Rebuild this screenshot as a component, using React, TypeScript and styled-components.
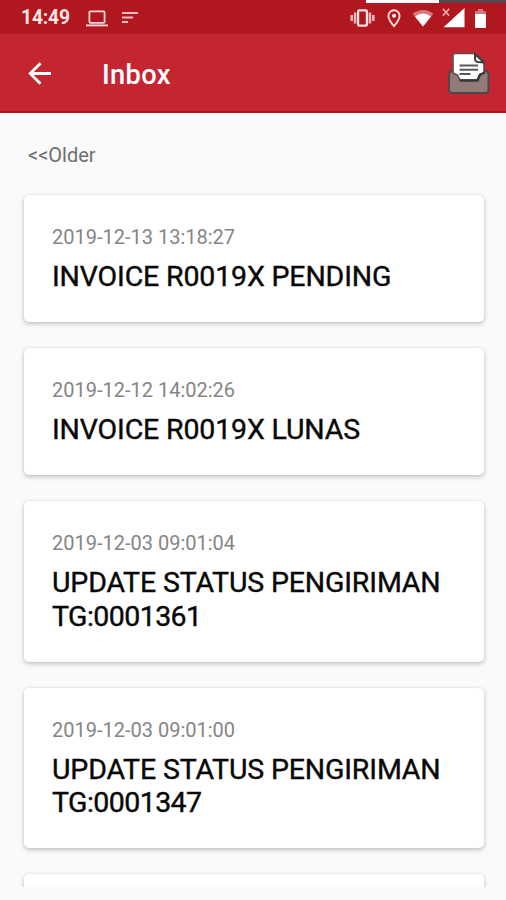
import React from 'react';
import styled, { createGlobalStyle } from 'styled-components';

const GlobalStyle = createGlobalStyle`
  * { box-sizing: border-box; }
  body { margin: 0; background: #fafafa; }
`;

const Screen = styled.div`
  position: relative;
  display: flex;
  flex-direction: column;
  width: 506px;
  height: 900px;
  overflow: hidden;
  background: #fafafa;
  font-family: Roboto, sans-serif;
`;

const TopStrip = styled.div`
  position: absolute;
  top: 0;
  right: 0;
  width: 140px;
  height: 3px;
  background: linear-gradient(to right, #fff 73px, #55474b 73px);
`;

const StatusBar = styled.header`
  display: flex;
  align-items: center;
  flex: none;
  height: 34px;
  padding: 2px 20px 0 21px;
  background: #b0171f;
  color: #fbe4e4;
`;

const Clock = styled.span`
  width: 65px;
  font-size: 19.3px;
  font-weight: 700;
  line-height: 32px;
  letter-spacing: -0.15px;
  white-space: nowrap;
`;

const Notifications = styled.div`
  display: flex;
  align-items: center;
  gap: 14px;
`;

const SystemIcons = styled.div`
  display: grid;
  grid-template-columns: 37px 25px 30px 33px 11px;
  align-items: center;
  margin-left: auto;
`;

const Icon = styled.svg`
  display: block;
  flex: none;
`;

const AppBar = styled.div`
  display: flex;
  align-items: center;
  flex: none;
  height: 79px;
  padding: 0 15px 0 28px;
  background: #c42631;
  border-bottom: 2px solid #b3131d;
  color: #fff;
`;

const Heading = styled.h1`
  flex: 1;
  margin: 5px 0 0 50px;
  font-size: 27.3px;
  font-weight: 500;
  line-height: 32px;
  letter-spacing: 0.3px;
`;

const Content = styled.main`
  display: flex;
  flex-direction: column;
  flex: none;
  height: 774px;
  overflow: hidden;
  padding: 28px 22px 0 24px;
`;

const OlderLink = styled.a`
  height: 28px;
  margin: 0 0 25px 4px;
  color: #6e6e6e;
  font-size: 20px;
  line-height: 28px;
`;

const MessageList = styled.div`
  display: flex;
  flex-direction: column;
  padding-top: 1px;
  gap: 26px;
`;

const Card = styled.article`
  flex: none;
  padding: 31px 28px 29px;
  border-radius: 5px;
  background: #fff;
  box-shadow: 0 2px 5px rgba(0, 0, 0, 0.22), 0 0 3px rgba(0, 0, 0, 0.08);
`;

const Timestamp = styled.time`
  display: block;
  height: 24px;
  margin-bottom: 10px;
  color: #858585;
  font-size: 20px;
  line-height: 23px;
`;

const Subject = styled.h2`
  margin: 0;
  color: #080808;
  font-size: 28.5px;
  font-weight: 400;
  line-height: 33.2px;
  letter-spacing: -0.55px;
  -webkit-text-stroke: 0.4px #080808;
  white-space: pre-line;

  &::first-line { letter-spacing: -0.15px; }
`;

const messages = [
  { time: '2019-12-13 13:18:27', subject: 'INVOICE R0019X PENDING' },
  { time: '2019-12-12 14:02:26', subject: 'INVOICE R0019X LUNAS' },
  { time: '2019-12-03 09:01:04', subject: 'UPDATE STATUS PENGIRIMAN\nTG:0001361' },
  { time: '2019-12-03 09:01:00', subject: 'UPDATE STATUS PENGIRIMAN\nTG:0001347' },
];

const LaptopIcon = () => (
  <Icon width="22" height="17" viewBox="0 0 22 17" fill="none" stroke="#fbd9da">
    <rect x="3.4" y="1.4" width="15.2" height="11.4" rx="1" strokeWidth="1.8" />
    <path d="M0 15.4h22" strokeWidth="1.9" />
  </Icon>
);

const NotesIcon = () => (
  <Icon width="18" height="14" viewBox="0 0 18 14" stroke="#f3bcbe" strokeWidth="2">
    <path d="M0 2h16M0 6.5h11M0 11h6" />
  </Icon>
);

const VibrateIcon = () => (
  <Icon width="25" height="18" viewBox="0 0 24 18" fill="none">
    <path d="M1.2 6v6M4.6 3.5v11M22.8 6v6M19.4 3.5v11" stroke="#efb5b8" strokeWidth="2.6" />
    <rect x="7.6" y="1.4" width="8.8" height="15.2" rx="1.2" stroke="#fbe4e4" strokeWidth="2.2" />
  </Icon>
);

const LocationIcon = () => (
  <Icon width="14" height="19" viewBox="0 0 14 19" fill="none">
    <path d="M7 1.2A5.6 5.6 0 0 0 1.4 6.8C1.4 10.8 7 17.2 7 17.2S12.6 10.8 12.6 6.8A5.6 5.6 0 0 0 7 1.2Z" stroke="#fbdcdc" strokeWidth="1.9" />
    <circle cx="7" cy="6.8" r="2.1" fill="#fbe4e4" />
  </Icon>
);

const WifiIcon = () => (
  <Icon width="22" height="18" viewBox="0 0 22 18">
    <path d="M.6 4.8C6.6-.4 15.4-.4 21.4 4.8L11 17.4Z" fill="#d8777c" />
    <path d="M3 7.4Q11 1.8 19 7.4L11 17.4Z" fill="#fff" />
  </Icon>
);

const SignalIcon = () => (
  <Icon width="23" height="20" viewBox="0 0 23 20">
    <path d="M22.5 0v19.2H1.5Z" fill="#fff" />
    <path d="M.8.7l6.4 7M7.2.7l-6.4 7" stroke="#f0b4b7" strokeWidth="1.6" />
  </Icon>
);

const BatteryIcon = () => (
  <Icon width="11" height="19" viewBox="0 0 11 19">
    <path d="M3 0h5v2h2q1 0 1 1v2H0V3q0-1 1-1h2Z" fill="#dc7378" />
    <path d="M0 5h11v13q0 1-1 1H1q-1 0-1-1Z" fill="#fff" />
  </Icon>
);

const BackIcon = () => (
  <Icon width="24" height="24" viewBox="0 0 24 24" fill="none" stroke="#fff" strokeWidth="2.8">
    <path d="M23 12.5H2.5M12.5 2.2L2.2 12.5l10.3 10.3" />
  </Icon>
);

const TrayIcon = () => (
  <Icon width="44" height="46" viewBox="0 -1 44 46" strokeLinejoin="round">
    <path d="M6 20H10L14 28H30L34 20H38Q41.5 20 41.5 24V39Q41.5 42 38.5 42H5Q2 42 2 39V24Q2 20 6 20Z" fill="#917b77" stroke="#51464a" strokeWidth="2" />
    <path d="M8 2.5H28.5L37 11V22L32.5 24.5L30.5 29H13L10.5 24L6 22V4.5Q6 2.5 8 2.5Z" fill="#fff" stroke="#61494e" strokeWidth="1.6" />
    <path d="M12.5 29.5H30.5L33 23.5L38 21.5" fill="none" stroke="#393638" strokeWidth="2.4" />
    <path d="M28 3L37 11.5L30.5 11Q28.2 10.5 28 8Z" fill="#fff" stroke="#3e3b3d" strokeWidth="2" />
    <path d="M12.5 14.5H31M12.5 18.7H31M12.5 23H23.5" stroke="#59585a" strokeWidth="2" />
  </Icon>
);

export default function App() {
  return (
    <Screen>
      <GlobalStyle />
      <StatusBar>
        <Clock>14:49</Clock>
        <Notifications>
          <LaptopIcon />
          <NotesIcon />
        </Notifications>
        <SystemIcons>
          <VibrateIcon />
          <LocationIcon />
          <WifiIcon />
          <SignalIcon />
          <BatteryIcon />
        </SystemIcons>
      </StatusBar>
      <TopStrip />
      <AppBar>
        <BackIcon />
        <Heading>Inbox</Heading>
        <TrayIcon />
      </AppBar>
      <Content>
        <OlderLink>&lt;&lt;Older</OlderLink>
        <MessageList>
          {messages.map((message) => (
            <Card key={message.time}>
              <Timestamp>{message.time}</Timestamp>
              <Subject>{message.subject}</Subject>
            </Card>
          ))}
          <Card />
        </MessageList>
      </Content>
    </Screen>
  );
}
